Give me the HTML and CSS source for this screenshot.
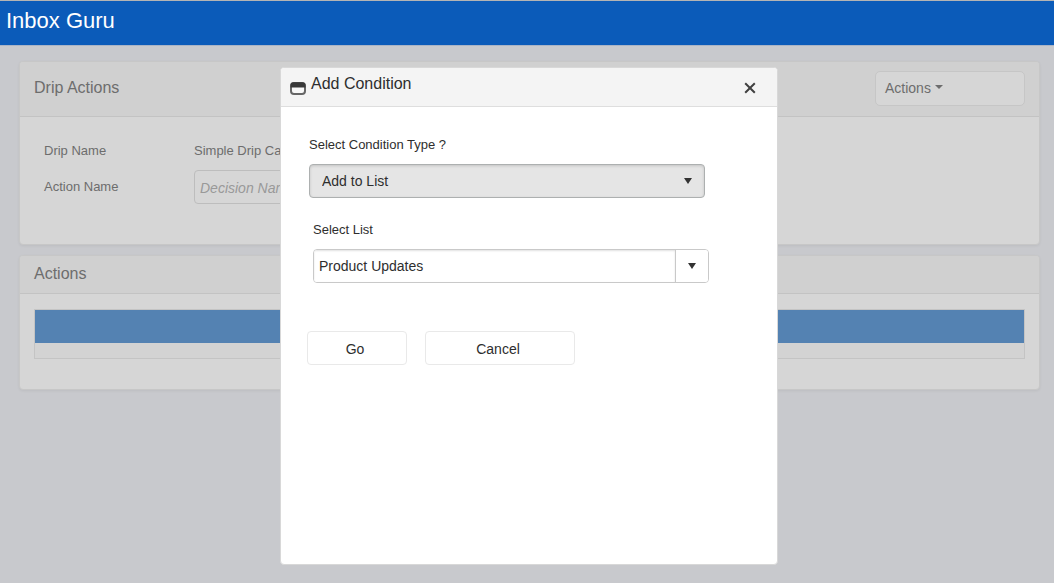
FILE: index.html
```
<!DOCTYPE html>
<html lang="en">
<head>
<meta charset="utf-8">
<title>Inbox Guru</title>
<link rel="stylesheet" href="styles.css">
</head>
<body>
<header class="topbar"><h1 class="brand">Inbox Guru</h1></header>
<main class="page">
  <section class="panel">
    <div class="panel-head panel-head-tall">
      <h2 class="panel-title">Drip Actions</h2>
      <button class="menu-button" type="button">Actions <span class="caret"></span></button>
    </div>
    <div class="panel-form">
      <span class="form-label">Drip Name</span>
      <span class="form-value">Simple Drip Campaign</span>
      <label class="form-label" for="action-name">Action Name</label>
      <input class="form-input" id="action-name" type="text" placeholder="Decision Name">
    </div>
  </section>
  <section class="panel">
    <div class="panel-head">
      <h2 class="panel-title">Actions</h2>
    </div>
    <div class="panel-grid">
      <div class="grid">
        <div class="grid-head"></div>
        <div class="grid-body"></div>
      </div>
    </div>
  </section>
</main>
<div class="overlay">
  <div class="modal" role="dialog" aria-labelledby="modal-title">
    <div class="modal-head">
      <svg class="window-icon" viewBox="0 0 16 13" aria-hidden="true">
        <rect x="1" y="1" width="14" height="11" rx="3" fill="#f8f8f8" stroke="#666" stroke-width="2"/>
        <path d="M.5 5.500V3.500Q.5.300 3.700.300H12.300Q15.500.300 15.500 3.500V5.500Z" fill="#383838"/>
      </svg>
      <h2 class="modal-title" id="modal-title">Add Condition</h2>
      <button class="close" type="button" aria-label="Close">
        <svg class="close-icon" viewBox="0 0 12 12" aria-hidden="true"><path d="M1.200 1.200L10.800 10.800M10.800 1.200L1.200 10.800" stroke="#404040" stroke-width="2"/></svg>
      </button>
    </div>
    <div class="modal-body">
      <div class="field">
        <label class="field-label" for="condition-type">Select Condition Type ?</label>
        <div class="select-wrap">
          <select class="select" id="condition-type"><option>Add to List</option></select>
          <span class="arrow"></span>
        </div>
      </div>
      <div class="field field-list">
        <label class="field-label" for="list">Select List</label>
        <div class="combo">
          <input class="combo-input" id="list" type="text" value="Product Updates">
          <button class="combo-button" type="button" aria-label="Open list"><span class="arrow"></span></button>
        </div>
      </div>
      <div class="buttons">
        <button class="button button-go" type="button">Go</button>
        <button class="button button-cancel" type="button">Cancel</button>
      </div>
    </div>
  </div>
</div>
</body>
</html>
```
FILE: styles.css
```
* { box-sizing: border-box; }
body {
  margin: 0;
  min-height: 100vh;
  background: #c8c9cd;
  color: #6d6d6d;
  font: 13px/16px "Liberation Sans", Arial, sans-serif;
}
button, input, select { font: inherit; color: inherit; margin: 0; }
h1, h2 { margin: 0; font-weight: normal; }
.topbar {
  height: 46px;
  padding: 7px 6px;
  background: #0b5bb9;
  border-top: 1px solid #b4b4b4;
  border-bottom: 1px solid #aab4c6;
}
.brand { font-size: 22px; line-height: 26px; color: #fff; }
.page {
  display: flex;
  flex-direction: column;
  gap: 10px;
  padding: 15px 14px 24px 19px;
}
.panel {
  background: #d6d6d6;
  border: 1px solid #c7c7c7;
  border-radius: 4px;
  box-shadow: 0 1px 3px rgba(0, 0, 0, .06);
}
.panel-head {
  display: flex;
  align-items: center;
  justify-content: space-between;
  height: 38px;
  padding: 0 14px 2px;
  background: #d0d0d0;
  border-bottom: 1px solid #c3c3c3;
  border-radius: 3px 3px 0 0;
}
.panel-head-tall { height: 55px; }
.panel-title { font-size: 16px; line-height: 20px; }
.menu-button {
  width: 150px;
  height: 35px;
  padding: 0 9px;
  text-align: left;
  font-size: 14px;
  background: #d6d6d6;
  border: 1px solid #c6c6c6;
  border-radius: 5px;
}
.caret {
  display: inline-block;
  vertical-align: middle;
  margin-bottom: 4px;
  border: 4px solid transparent;
  border-top-color: #6d6d6d;
  border-bottom: 0;
}
.panel-form {
  display: grid;
  grid-template-columns: 150px 180px;
  grid-template-rows: 16px 34px;
  row-gap: 11px;
  padding: 26px 24px 40px;
}
.form-input {
  height: 34px;
  padding: 2px 5px 0;
  font-size: 14px;
  font-style: italic;
  background: #d6d6d6;
  border: 1px solid #bdbdbd;
  border-radius: 4px;
}
.form-input::placeholder { color: #999; opacity: 1; }
label.form-label { padding-top: 9px; }
.panel-grid { padding: 15px 14px 30px; }
.grid { background: #d3d3d3; border: 1px solid #c4c4c4; }
.grid-head { height: 33px; background: #5482b2; }
.grid-body { height: 15px; }

.overlay {
  position: fixed;
  inset: 0;
  display: flex;
  justify-content: center;
  align-items: flex-start;
  padding: 67px 0 18px 4px;
}
.modal {
  width: 498px;
  height: 100%;
  background: #fff;
  border: 1px solid #d8d8d8;
  border-radius: 4px;
  color: #2e2e2e;
}
.modal-head {
  display: flex;
  align-items: center;
  gap: 5px;
  height: 39px;
  padding: 0 20px 0 9px;
  background: #f4f4f4;
  border-bottom: 1px solid #dedede;
  border-radius: 3px 3px 0 0;
}
.window-icon { width: 16px; height: 13px; margin-top: 2px; }
.modal-title { flex: 1; padding-bottom: 6px; font-size: 16px; line-height: 20px; }
.close { display: flex; padding: 2px 1px 0; background: none; border: 0; }
.close-icon { width: 12px; height: 12px; }
.modal-body { padding: 30px 26px; }
.field { width: 398px; max-width: 100%; padding-left: 2px; margin-bottom: 24px; }
.field-list { width: 402px; padding-left: 6px; margin-bottom: 48px; }
.field-label { display: block; margin-bottom: 11px; }
.select-wrap { position: relative; }
.select {
  appearance: none;
  display: block;
  width: 100%;
  height: 34px;
  padding: 0 12px;
  font-size: 14px;
  background: #e5e5e5;
  border: 1px solid #adb0b0;
  border-radius: 4px;
  box-shadow: inset 0 1px 3px rgba(0, 0, 0, .15);
}
.arrow {
  display: block;
  border: 4px solid transparent;
  border-top: 6px solid #333;
  border-bottom: 0;
}
.select-wrap .arrow { position: absolute; right: 13px; top: 14px; pointer-events: none; }
.combo {
  display: flex;
  height: 34px;
  border: 1px solid #c9c9c9;
  border-radius: 4px;
  overflow: hidden;
}
.combo-input {
  flex: 1;
  min-width: 0;
  padding: 0 5px;
  font-size: 14px;
  background: #fff;
  border: 0;
  box-shadow: inset 0 1px 2px rgba(0, 0, 0, .12);
}
.combo-button {
  display: grid;
  place-items: center;
  width: 33px;
  padding: 0;
  background: #fff;
  border: 0;
  border-left: 1px solid #c9c9c9;
}
.buttons { display: flex; gap: 18px; }
.button {
  height: 34px;
  padding: 2px 4px 0 0;
  font-size: 14px;
  background: #fff;
  border: 1px solid #e9e9e9;
  border-radius: 4px;
}
.button-go { width: 100px; }
.button-cancel { width: 150px; }
```
